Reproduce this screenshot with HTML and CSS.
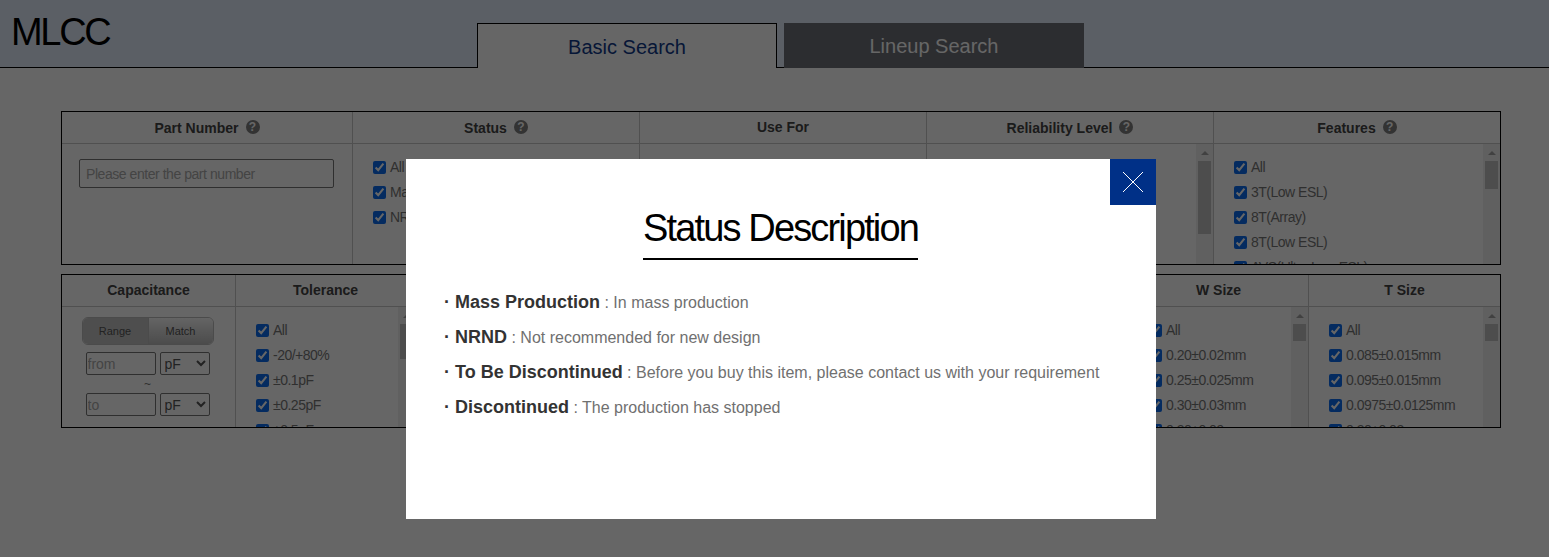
FILE: index.html
```html
<!DOCTYPE html>
<html lang="en">
<head>
<meta charset="utf-8">
<title>MLCC</title>
<link rel="stylesheet" href="styles.css">
</head>
<body>
<header class="top">
  <h1 class="brand">MLCC</h1>
  <nav class="tabs">
    <a class="tab tab-on">Basic Search</a>
    <a class="tab tab-off">Lineup Search</a>
  </nav>
</header>
<main class="filters">
  <section class="panel panel-a">
    <div class="col">
      <div class="head">Part Number <i class="help">?</i></div>
      <div class="body part"><input class="part-input" type="text" placeholder="Please enter the part number"></div>
    </div>
    <div class="col">
      <div class="head">Status <i class="help">?</i></div>
      <div class="body">
        <ul class="list">
          <li><label><input type="checkbox" checked>All</label></li>
          <li><label><input type="checkbox" checked>Mass Production</label></li>
          <li><label><input type="checkbox" checked>NRND</label></li>
        </ul>
      </div>
    </div>
    <div class="col">
      <div class="head head-up">Use For</div>
      <div class="body"></div>
    </div>
    <div class="col">
      <div class="head">Reliability Level <i class="help">?</i></div>
      <div class="body">
        <ul class="list"></ul>
        <div class="bar"><b class="up"></b><span class="track"><s class="thumb t73"></s></span><b class="down"></b></div>
      </div>
    </div>
    <div class="col">
      <div class="head">Features <i class="help">?</i></div>
      <div class="body">
        <ul class="list">
          <li><label><input type="checkbox" checked>All</label></li>
          <li><label><input type="checkbox" checked>3T(Low ESL)</label></li>
          <li><label><input type="checkbox" checked>8T(Array)</label></li>
          <li><label><input type="checkbox" checked>8T(Low ESL)</label></li>
          <li><label><input type="checkbox" checked>AVS(Ultra Low ESL)</label></li>
        </ul>
        <div class="bar"><b class="up"></b><span class="track"><s class="thumb t28"></s></span><b class="down"></b></div>
      </div>
    </div>
  </section>
  <section class="panel panel-b">
    <div class="col">
      <div class="head head-up">Capacitance</div>
      <div class="body cap">
        <div class="toggle"><span class="seg seg-on">Range</span><span class="seg">Match</span></div>
        <div class="cap-row"><input class="cap-input" type="text" placeholder="from"><select class="cap-unit"><option>pF</option></select></div>
        <div class="tilde">~</div>
        <div class="cap-row"><input class="cap-input" type="text" placeholder="to"><select class="cap-unit"><option>pF</option></select></div>
      </div>
    </div>
    <div class="col">
      <div class="head head-up">Tolerance</div>
      <div class="body">
        <ul class="list">
          <li><label><input type="checkbox" checked>All</label></li>
          <li><label><input type="checkbox" checked>-20/+80%</label></li>
          <li><label><input type="checkbox" checked>±0.1pF</label></li>
          <li><label><input type="checkbox" checked>±0.25pF</label></li>
          <li><label><input type="checkbox" checked>±0.5pF</label></li>
        </ul>
        <div class="bar"><b class="up"></b><span class="track"><s class="thumb t35"></s></span><b class="down"></b></div>
      </div>
    </div>
    <div class="col"><div class="head head-up">Rated Voltage</div><div class="body"></div></div>
    <div class="col"><div class="head head-up">Temp. Char.</div><div class="body"></div></div>
    <div class="col"><div class="head head-up">Size</div><div class="body"></div></div>
    <div class="col"><div class="head head-up">L Size</div><div class="body"></div></div>
    <div class="col">
      <div class="head head-up">W Size</div>
      <div class="body">
        <ul class="list">
          <li><label><input type="checkbox" checked>All</label></li>
          <li><label><input type="checkbox" checked>0.20±0.02mm</label></li>
          <li><label><input type="checkbox" checked>0.25±0.025mm</label></li>
          <li><label><input type="checkbox" checked>0.30±0.03mm</label></li>
          <li><label><input type="checkbox" checked>0.30±0.09mm</label></li>
        </ul>
        <div class="bar"><b class="up"></b><span class="track"><s class="thumb t17"></s></span><b class="down"></b></div>
      </div>
    </div>
    <div class="col">
      <div class="head head-up">T Size</div>
      <div class="body">
        <ul class="list">
          <li><label><input type="checkbox" checked>All</label></li>
          <li><label><input type="checkbox" checked>0.085±0.015mm</label></li>
          <li><label><input type="checkbox" checked>0.095±0.015mm</label></li>
          <li><label><input type="checkbox" checked>0.0975±0.0125mm</label></li>
          <li><label><input type="checkbox" checked>0.30±0.03mm</label></li>
        </ul>
        <div class="bar"><b class="up"></b><span class="track"><s class="thumb t17"></s></span><b class="down"></b></div>
      </div>
    </div>
  </section>
</main>
<div class="overlay">
  <div class="modal">
    <button class="close" type="button" aria-label="Close">
      <svg width="22" height="22" viewBox="0 0 22 22"><path d="M1 1L21 21M21 1L1 21" stroke="#fff" stroke-width="1" fill="none"/></svg>
    </button>
    <h2 class="modal-title"><span>Status Description</span></h2>
    <ul class="desc">
      <li><strong>Mass Production</strong> : In mass production</li>
      <li><strong>NRND</strong> : Not recommended for new design</li>
      <li><strong>To Be Discontinued</strong> : Before you buy this item, please contact us with your requirement</li>
      <li><strong>Discontinued</strong> : The production has stopped</li>
    </ul>
  </div>
</div>
</body>
</html>
```
FILE: styles.css
```css
* { box-sizing: border-box; }
html, body { margin: 0; padding: 0; height: 100%; overflow: hidden; }
body { background: #fff; font-family: "Liberation Sans", Arial, sans-serif; color: #777; }

.top {
  height: 68px;
  display: flex;
  align-items: flex-end;
  background: #e4eefc;
  border-bottom: 1px solid #000;
  padding-left: 11px;
}
.brand {
  margin: 0;
  align-self: flex-start;
  padding-top: 10px;
  width: 466px;
  font-size: 38px;
  line-height: 44px;
  font-weight: 400;
  letter-spacing: -2.3px;
  color: #000;
}
.tabs { display: flex; gap: 7px; margin-bottom: -1px; }
.tab {
  width: 300px;
  height: 45px;
  display: flex;
  align-items: center;
  justify-content: center;
  font-size: 20px;
}
.tab-on {
  background: #fff;
  border: 1px solid #000;
  border-bottom: 0;
  color: #103a8a;
  padding-top: 2px;
}
.tab-off { background: #6e7078; color: #fff; padding-top: 1px; }

.filters { padding: 43px 48px 0 61px; display: flex; flex-direction: column; gap: 9px; }
.panel {
  height: 154px;
  display: grid;
  border: 1px solid #000;
  overflow: hidden;
}
.panel-a { grid-template-columns: 291px 287px 287px 287px 1fr; }
.panel-b { grid-template-columns: 174px 180px 178px 178px 178px 179px 180px 1fr; }
.col { min-width: 0; display: flex; flex-direction: column; border-right: 1px solid #c8c8c8; }
.col:last-child { border-right: 0; }
.head {
  height: 32px;
  flex: none;
  display: flex;
  align-items: center;
  justify-content: center;
  gap: 7px;
  border-bottom: 1px solid #c8c8c8;
  font-size: 14px;
  font-weight: 700;
  color: #444;
}
.head-up { padding-bottom: 2px; }
.help {
  width: 14px;
  height: 14px;
  margin-top: -2px;
  border-radius: 50%;
  background: #808080;
  color: #fff;
  font-size: 12px;
  line-height: 14px;
  font-style: normal;
  text-align: center;
}
.body { flex: 1; min-height: 0; display: flex; overflow: hidden; }
.list { flex: 1; min-width: 0; margin: 0; padding: 11px 0 0 20px; list-style: none; font-size: 14px; letter-spacing: -.5px; }
.list li { height: 25px; white-space: nowrap; }
.list label { display: flex; align-items: center; height: 25px; padding-bottom: 2px; }
.list input { width: 13px; height: 13px; margin: 2px 4px 0 0; accent-color: #0a6cf0; }

.bar { width: 17px; flex: none; display: flex; flex-direction: column; background: #f1f1f1; }
.up, .down { height: 17px; flex: none; display: flex; justify-content: center; align-items: center; }
.up::before { content: ""; border: 4px solid transparent; border-top: 0; border-bottom: 4px solid #a3a3a3; }
.down::before { content: ""; border: 4px solid transparent; border-bottom: 0; border-top: 4px solid #505050; }
.track { flex: 1; padding: 0 2px; }
.thumb { display: block; background: #c1c1c1; }
.t17 { height: 17px; }
.t28 { height: 28px; }
.t35 { height: 35px; }
.t73 { height: 73px; }

.part { padding: 15px 18px 0 17px; }
.part-input {
  display: block;
  width: 255px;
  height: 29px;
  padding: 0 6px;
  border: 1px solid #767676;
  border-radius: 2px;
  font: 14px "Liberation Sans", Arial, sans-serif;
  letter-spacing: -.45px;
}
.part-input::placeholder, .cap-input::placeholder { color: #aaa; }

.cap { flex-direction: column; align-items: center; padding: 10px 2px 0 0; }
.toggle {
  width: 132px;
  height: 28px;
  display: flex;
  border: 1px solid #bbb;
  border-radius: 6px;
  overflow: hidden;
  font-size: 11px;
  color: #555;
}
.seg {
  flex: 1;
  display: flex;
  align-items: center;
  justify-content: center;
  background: linear-gradient(#fafafa, #bdbdbd);
}
.seg-on { flex: 0 0 66px; background: #c4c4c4; border-right: 1px solid #bbb; }
.cap-row { display: flex; gap: 4px; }
.toggle + .cap-row { margin-top: 7px; }
.cap-input {
  width: 70px;
  height: 23px;
  padding: 0 1px;
  border: 1px solid #767676;
  border-radius: 2px;
  font: 14px "Liberation Sans", Arial, sans-serif;
}
.cap-unit {
  width: 50px;
  height: 23px;
  font: 14px "Liberation Sans", Arial, sans-serif;
  background: #fff;
  border: 1px solid #767676;
  border-radius: 2px;
  color: #555;
}
.tilde { height: 18px; font-size: 12px; line-height: 18px; }

.overlay { position: fixed; inset: 0; background: rgba(0, 0, 0, .6); padding: 159px 0 0 406px; }
.modal { position: relative; width: 750px; height: 360px; background: #fff; padding: 47px 39px 0 38px; }
.close {
  position: absolute;
  top: 0;
  right: 0;
  width: 46px;
  height: 46px;
  padding: 0;
  border: 0;
  background: #003087;
  display: flex;
  align-items: center;
  justify-content: center;
}
.modal-title {
  margin: 0;
  text-align: center;
  font-size: 38px;
  line-height: 44px;
  font-weight: 400;
  letter-spacing: -1.85px;
  color: #000;
}
.modal-title span { display: inline-block; padding-bottom: 8px; border-bottom: 2px solid #000; }
.desc { margin: 25px 0 0; padding: 0; list-style: none; font-size: 16px; color: #707070; }
.desc li { height: 35px; line-height: 35px; padding-left: 11px; position: relative; white-space: nowrap; }
.desc li::before { content: "·"; position: absolute; left: 0; font-size: 18px; font-weight: 700; color: #333; }
.desc strong { font-size: 18px; color: #333; }
```
